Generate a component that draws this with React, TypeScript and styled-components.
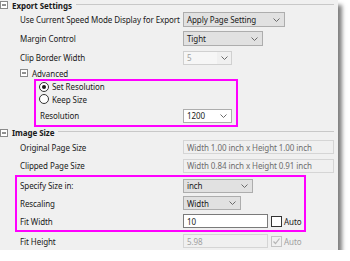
import styled, { createGlobalStyle } from "styled-components";

const GlobalStyle = createGlobalStyle`
  html, body {
    margin: 0;
    padding: 0;
    background: #ffffff;
  }
`;

const Panel = styled.div`
  width: 338px;
  height: 250px;
  overflow: hidden;
  background: #f0f0f0;
  box-shadow: 4px 5px 4px rgba(0, 0, 0, 0.5);
  display: flex;
  flex-direction: column;
  font-family: "Noto Sans", "Open Sans", sans-serif;
  font-size: 8px;
  letter-spacing: -0.08px;
  color: #1a1a1a;
`;

const SectionHeader = styled.div<{ $h: number; $indent?: number }>`
  display: flex;
  align-items: center;
  height: ${(p) => p.$h}px;
  padding-left: ${(p) => p.$indent || 0}px;
  gap: 4px;
  font-weight: ${(p) => (p.$indent ? "normal" : "bold")};
  white-space: nowrap;
`;

const HeaderLine = styled.div`
  flex: 1;
  height: 1px;
  margin-top: -2px;
  margin-right: 4px;
  background: #c8c8c8;
`;

const Row = styled.div<{ $h: number; $indent: number }>`
  display: flex;
  align-items: center;
  height: ${(p) => p.$h}px;
  padding-left: ${(p) => p.$indent}px;
  flex: none;
`;

const Label = styled.div<{ $w: number }>`
  width: ${(p) => p.$w}px;
  flex: none;
  white-space: nowrap;
`;

const Highlight = styled.div<{ $left: number; $width: number }>`
  margin-left: ${(p) => p.$left}px;
  width: ${(p) => p.$width}px;
  border: 2px solid #ff00ff;
  box-sizing: border-box;
  flex: none;
`;

const Combo = styled.div<{ $w: number; $h?: number; $edit?: boolean }>`
  width: ${(p) => p.$w}px;
  height: ${(p) => p.$h || 15}px;
  box-sizing: border-box;
  border: 1px solid #adadad;
  background: ${(p) => (p.$edit ? "#ffffff" : "#e1e1e1")};
  display: flex;
  align-items: center;
  justify-content: space-between;
  padding: 0 4px 0 3px;
  white-space: nowrap;
`;

const DisabledCombo = styled.div<{ $w: number }>`
  width: ${(p) => p.$w}px;
  height: 14px;
  box-sizing: border-box;
  border: 1px solid #d0d0d0;
  background: #f0f0f0;
  display: flex;
  align-items: center;
  color: #a0a0a0;
`;

const DisabledText = styled.div`
  flex: 1;
  height: 100%;
  background: #f6f6f6;
  padding-left: 3px;
  display: flex;
  align-items: center;
`;

const ArrowCell = styled.div`
  width: 14px;
  display: flex;
  justify-content: center;
`;

const Field = styled.div<{ $w: number; $disabled?: boolean; $white?: boolean }>`
  width: ${(p) => p.$w}px;
  height: 14px;
  box-sizing: border-box;
  border: 1px solid ${(p) => (p.$white ? "#7a7a7a" : "#d5d5d5")};
  background: ${(p) => (p.$white ? "#ffffff" : "#f0f0f0")};
  color: ${(p) => (p.$white ? "#1a1a1a" : p.$disabled ? "#a0a0a0" : "#6d6d6d")};
  padding-left: 3px;
  display: flex;
  align-items: center;
  white-space: nowrap;
`;

const CheckWrap = styled.div<{ $disabled?: boolean }>`
  display: flex;
  align-items: center;
  gap: 2px;
  margin-left: 3px;
  color: ${(p) => (p.$disabled ? "#a0a0a0" : "#1a1a1a")};
`;

const Box = styled.div<{ $disabled?: boolean }>`
  width: 11px;
  height: 11px;
  box-sizing: border-box;
  border: 1px solid ${(p) => (p.$disabled ? "#c4c4c4" : "#333333")};
  background: ${(p) => (p.$disabled ? "#f0f0f0" : "#ffffff")};
  display: flex;
  align-items: center;
  justify-content: center;
`;

const RadioCircle = styled.div<{ $on?: boolean }>`
  width: 10px;
  height: 10px;
  box-sizing: border-box;
  border-radius: 50%;
  border: 1px solid #333333;
  background: #ffffff;
  margin-right: 3px;
  display: flex;
  align-items: center;
  justify-content: center;
  &::after {
    content: "";
    width: 4px;
    height: 4px;
    border-radius: 50%;
    background: ${(p) => (p.$on ? "#1a1a1a" : "transparent")};
  }
`;

const Chevron = () => (
  <svg width="7" height="4" viewBox="0 0 7 4">
    <path d="M0.5 0.5 L3.5 3.5 L6.5 0.5" fill="none" stroke="#6a6a6a" strokeWidth="1" />
  </svg>
);

const Toggle = () => (
  <svg width="8" height="8" viewBox="0 0 8 8">
    <rect x="0.5" y="0.5" width="7" height="7" fill="#ffffff" stroke="#8a8a8a" />
    <path d="M2 4 H6" stroke="#222" strokeWidth="1" />
  </svg>
);

const Check = () => (
  <svg width="9" height="9" viewBox="0 0 9 9">
    <path d="M1.5 4.5 L3.5 6.5 L7.5 1.5" fill="none" stroke="#b5b5b5" strokeWidth="1.2" />
  </svg>
);

export default function App() {
  return (
    <>
      <GlobalStyle />
      <Panel>
        <SectionHeader $h={10}>
          <Toggle />
          Export Settings
          <HeaderLine />
        </SectionHeader>
        <Row $h={19} $indent={20}>
          <Label $w={163}>Use Current Speed Mode Display for Export</Label>
          <Combo $w={102}>
            Apply Page Setting
            <Chevron />
          </Combo>
        </Row>
        <Row $h={19} $indent={20}>
          <Label $w={163}>Margin Control</Label>
          <Combo $w={80}>
            Tight
            <Chevron />
          </Combo>
        </Row>
        <Row $h={19} $indent={20}>
          <Label $w={163}>Clip Border Width</Label>
          <DisabledCombo $w={49}>
            <DisabledText>5</DisabledText>
            <ArrowCell>
              <Chevron />
            </ArrowCell>
          </DisabledCombo>
        </Row>
        <SectionHeader $h={14} $indent={20}>
          <Toggle />
          Advanced
        </SectionHeader>
        <Highlight $left={34} $width={204}>
          <Row $h={11} $indent={3}>
            <RadioCircle $on />
            Set Resolution
          </Row>
          <Row $h={14} $indent={3}>
            <RadioCircle />
            Keep Size
          </Row>
          <Row $h={19} $indent={4}>
            <Label $w={143}>Resolution</Label>
            <Combo $w={49} $h={14} $edit>
              1200
              <Chevron />
            </Combo>
          </Row>
        </Highlight>
        <SectionHeader $h={11}>
          <Toggle />
          Image Size
          <HeaderLine />
        </SectionHeader>
        <Row $h={18} $indent={20}>
          <Label $w={163}>Original Page Size</Label>
          <Field $w={151}>Width 1.00 inch x Height 1.00 inch</Field>
        </Row>
        <Row $h={19} $indent={20}>
          <Label $w={163}>Clipped Page Size</Label>
          <Field $w={151}>Width 0.84 inch x Height 0.91 inch</Field>
        </Row>
        <Highlight $left={15} $width={291}>
          <Row $h={17} $indent={3}>
            <Label $w={163}>Specify Size in:</Label>
            <Combo $w={70} $h={14}>
              inch
              <Chevron />
            </Combo>
          </Row>
          <Row $h={18} $indent={3}>
            <Label $w={163}>Rescaling</Label>
            <Combo $w={58} $h={14}>
              Width
              <Chevron />
            </Combo>
          </Row>
          <Row $h={18} $indent={3}>
            <Label $w={163}>Fit Width</Label>
            <Field $w={85} $white>
              10
            </Field>
            <CheckWrap>
              <Box />
              Auto
            </CheckWrap>
          </Row>
        </Highlight>
        <Row $h={18} $indent={20}>
          <Label $w={163}>Fit Height</Label>
          <Field $w={85} $disabled>
            5.98
          </Field>
          <CheckWrap $disabled>
            <Box $disabled>
              <Check />
            </Box>
            Auto
          </CheckWrap>
        </Row>
      </Panel>
    </>
  );
}
